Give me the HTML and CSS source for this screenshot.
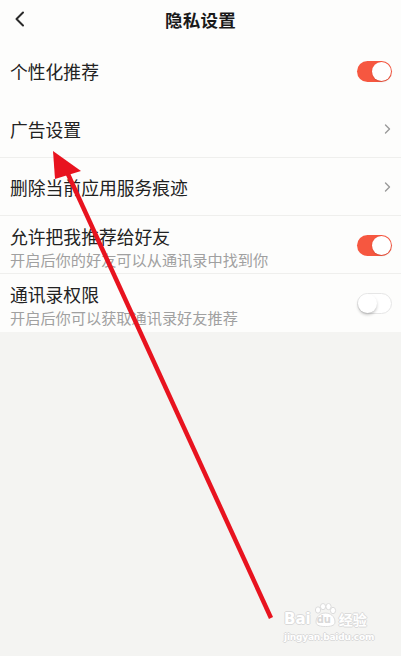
FILE: index.html
```html
<!DOCTYPE html>
<html lang="zh-CN">
<head>
<meta charset="utf-8">
<title>隐私设置</title>
<link rel="stylesheet" href="styles.css">
</head>
<body>
<div class="page">
  <header class="topbar">
    <svg class="back" width="12" height="16" viewBox="0 0 12 16"><path d="M9 1.5 L2.5 8 L9 14.5" fill="none" stroke="#2a2a2a" stroke-width="2" stroke-linecap="round" stroke-linejoin="round"/></svg>
    <h1 class="title">隐私设置</h1>
  </header>
  <ul class="list">
    <li class="row">
      <span class="label">个性化推荐</span>
      <span class="switch on"><span class="knob"></span></span>
    </li>
    <li class="row line">
      <span class="label">广告设置</span>
      <svg class="chev" width="7" height="10" viewBox="0 0 7 10"><path d="M1.5 1 L5.5 5 L1.5 9" fill="none" stroke="#9a9a9a" stroke-width="1.4" stroke-linecap="round" stroke-linejoin="round"/></svg>
    </li>
    <li class="row line">
      <span class="label">删除当前应用服务痕迹</span>
      <svg class="chev" width="7" height="10" viewBox="0 0 7 10"><path d="M1.5 1 L5.5 5 L1.5 9" fill="none" stroke="#9a9a9a" stroke-width="1.4" stroke-linecap="round" stroke-linejoin="round"/></svg>
    </li>
    <li class="row two line">
      <div class="texts">
        <span class="label">允许把我推荐给好友</span>
        <span class="sub">开启后你的好友可以从通讯录中找到你</span>
      </div>
      <span class="switch on"><span class="knob"></span></span>
    </li>
    <li class="row two">
      <div class="texts">
        <span class="label">通讯录权限</span>
        <span class="sub">开启后你可以获取通讯录好友推荐</span>
      </div>
      <span class="switch off"><span class="knob"></span></span>
    </li>
  </ul>

  <div class="watermark">
    <div class="wm-top">
      <span class="wm-bai">Bai</span>
      <span class="wm-paw">
        <svg width="26" height="24" viewBox="0 0 26 24">
          <g fill="#ffffff" stroke="#dcdcdc" stroke-width="1">
            <ellipse cx="6" cy="7" rx="2.6" ry="3.2"/>
            <ellipse cx="11" cy="3.6" rx="2.6" ry="3.1"/>
            <ellipse cx="16.5" cy="3.6" rx="2.6" ry="3.1"/>
            <ellipse cx="21" cy="7.5" rx="2.6" ry="3.2"/>
            <path d="M4 19 C4 13 9 10 13.5 10 C18 10 23 13 23 19 C23 23 18 23.5 13.5 23.5 C9 23.5 4 23 4 19 Z"/>
          </g>
        </svg>
        <span class="wm-du">du</span>
      </span>
      <span class="wm-jy">经验</span>
    </div>
    <div class="wm-url">jingyan.baidu.com</div>
  </div>

  <svg class="arrow" width="401" height="656" viewBox="0 0 401 656">
    <line x1="67" y1="172" x2="271" y2="618" stroke="#e8131f" stroke-width="4.5"/>
    <polygon points="53,151 81,171 55,179" fill="#e8131f"/>
  </svg>
</div>
</body>
</html>
```

FILE: styles.css
```css
* { box-sizing: border-box; }
html, body {
  margin: 0;
  padding: 0;
}
body {
  background: #f4f4f2;
  font-family: "Noto Sans CJK SC", "Noto Sans", sans-serif;
  color: #222;
}
.page {
  position: relative;
  width: 401px;
  height: 656px;
  overflow: hidden;
}
.topbar {
  height: 42px;
  background: #fdfdfc;
  display: flex;
  align-items: center;
  justify-content: center;
  position: relative;
  padding-bottom: 4px;
}
.back {
  position: absolute;
  left: 14px;
  top: 11px;
}
.title {
  margin: 0;
  font-size: 17.5px;
  font-weight: 700;
  color: #1a1a1a;
  letter-spacing: 0.2px;
}
.list {
  list-style: none;
  margin: 0;
  padding: 0;
  background: #fdfdfc;
}
.row {
  height: 58px;
  display: flex;
  align-items: center;
  justify-content: space-between;
  padding: 0 9px 0 10px;
}
.row.line {
  border-bottom: 1px solid #efefed;
}
.row.two {
  align-items: flex-start;
  padding-top: 8px;
}
.row.two .switch {
  margin-top: 11px;
}
.label {
  font-size: 17.8px;
  line-height: 24px;
  color: #222;
}
.texts {
  display: flex;
  flex-direction: column;
}
.sub {
  font-size: 15.2px;
  line-height: 22px;
  color: #a0a0a0;
}
.chev {
  margin-right: 1px;
  margin-top: 1px;
}
.switch {
  width: 35px;
  height: 21px;
  border-radius: 11px;
  display: flex;
  align-items: center;
  padding: 1px;
}
.switch.on {
  background: #f65740;
  justify-content: flex-end;
}
.switch.off {
  background: #ffffff;
  border: 1px solid #e6e6e6;
  justify-content: flex-start;
  padding: 0;
}
.knob {
  width: 19px;
  height: 19px;
  border-radius: 50%;
  background: #fff;
}
.switch.off .knob {
  box-shadow: 0 2px 3px rgba(0,0,0,0.22);
}
.switch.on .knob {
  box-shadow: 0 1px 2px rgba(0,0,0,0.12);
}
.arrow {
  position: absolute;
  left: 0;
  top: 0;
  pointer-events: none;
}
.watermark {
  position: absolute;
  left: 284px;
  top: 605px;
  width: 92px;
  font-family: "DejaVu Sans", sans-serif;
  color: #ffffff;
}
.wm-top {
  display: flex;
  align-items: flex-end;
  height: 22px;
}
.wm-bai, .wm-du, .wm-jy, .wm-url {
  text-shadow: 1px 0 0 #dadada, -1px 0 0 #dadada, 0 1px 0 #dadada, 0 -1px 0 #dadada;
}
.wm-bai {
  font-size: 15px;
  font-weight: 700;
  line-height: 15px;
}
.wm-paw {
  position: relative;
  width: 26px;
  height: 22px;
  margin-left: 1px;
}
.wm-paw svg {
  position: absolute;
  left: 0;
  top: -2px;
}
.wm-du {
  position: absolute;
  left: 5px;
  top: 9px;
  font-size: 10px;
  font-weight: 700;
  color: #d8d8d8;
  text-shadow: none;
}
.wm-jy {
  font-family: "Noto Sans CJK SC", sans-serif;
  font-size: 14px;
  font-weight: 700;
  line-height: 16px;
  margin-left: 1px;
}
.wm-url {
  font-size: 9px;
  font-weight: 700;
  line-height: 12px;
  margin-top: 4px;
  letter-spacing: -0.2px;
}
```
